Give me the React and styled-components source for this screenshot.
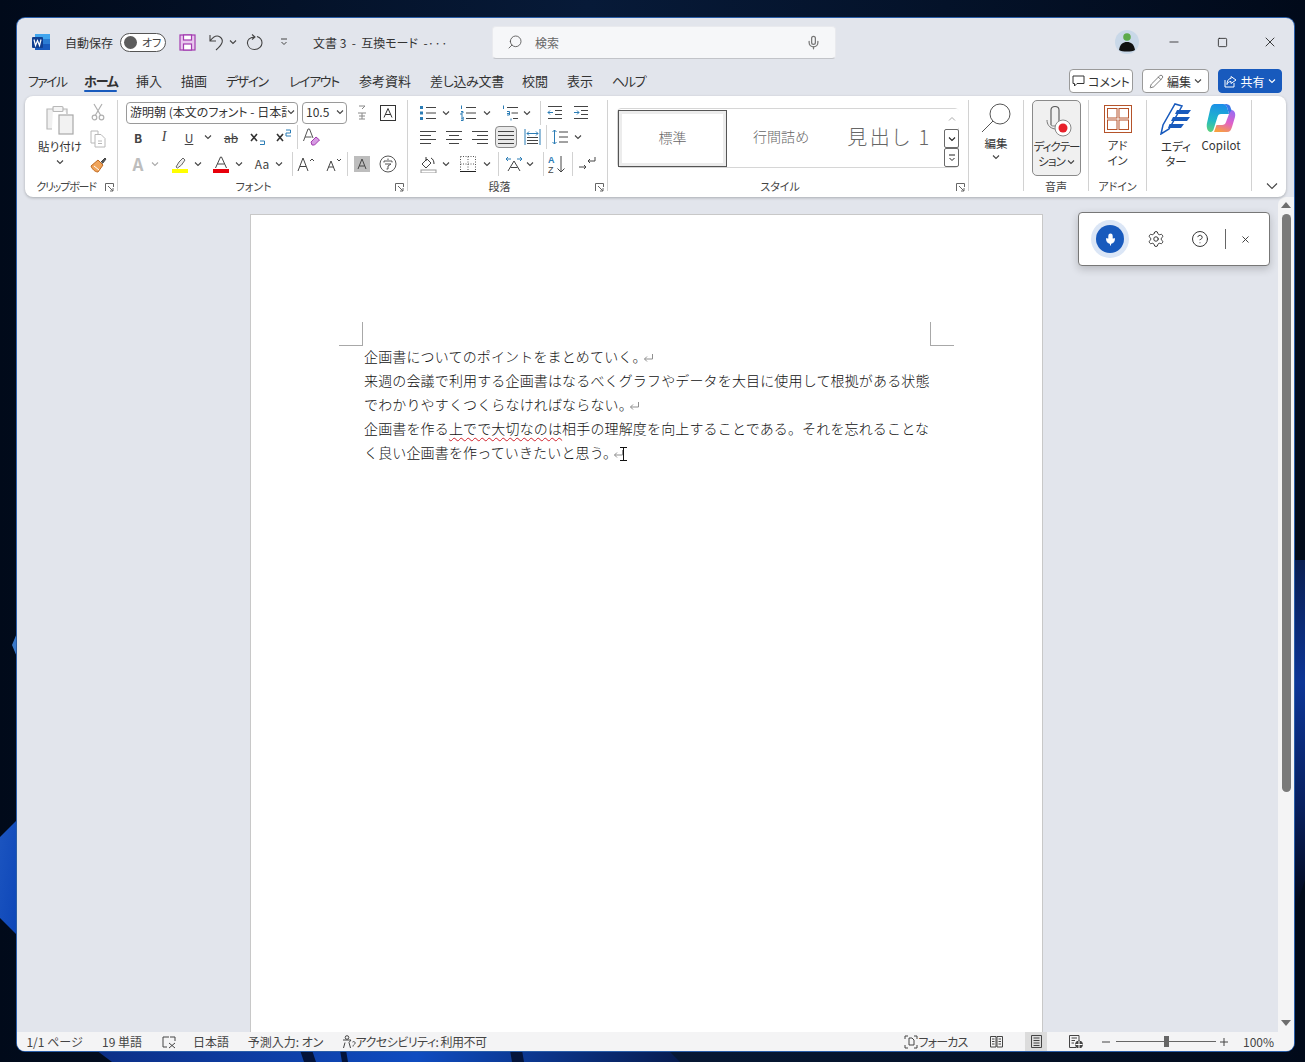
import React from 'react';
import styled, { createGlobalStyle } from 'styled-components';
import { Mic, Minus, Square, X, Settings, CircleHelp, Search, Pencil } from 'lucide-react';

const GlobalStyle = createGlobalStyle`
  html, body { margin: 0; padding: 0; width: 1305px; height: 1062px; overflow: hidden; background: #06142c; }
  * { box-sizing: border-box; }
  body {
    font-family: "Noto Sans CJK JP", "Noto Sans", sans-serif;
    font-feature-settings: "palt";
    color: #333;
  }
`;

// Desktop
const Desktop = styled.div`
  position: relative;
  width: 1305px;
  height: 1062px;
  padding: 18px 11px 11px 17px;
  background: linear-gradient(90deg, #010a1a 0%, #071a38 45%, #010a1a 100%);
`;

const Wallpaper = styled.svg`
  position: absolute;
  inset: 0;
`;

const Window = styled.div`
  position: relative;
  display: flex;
  flex-direction: column;
  width: 1277px;
  height: 1033px;
  background: #e2e5ec;
  border-radius: 8px;
  box-shadow: 0 0 0 1px #2a5ea8;
  overflow: hidden;
`;

// Title bar
const TitleBar = styled.div`
  display: flex;
  align-items: center;
  height: 48px;
  flex: none;
`;

const Item = styled.div`
  display: flex;
  align-items: center;
  justify-content: center;
  flex: none;
  width: ${(p) => (p.$w ? `${p.$w}px` : 'auto')};
  margin-left: ${(p) => p.$ml || 0}px;
`;

const TitleText = styled.span`
  flex: none;
  width: ${(p) => (p.$w ? `${p.$w}px` : 'auto')};
  font-size: 12px;
  color: #333;
  white-space: nowrap;
  margin-left: ${(p) => p.$ml || 0}px;
`;

const Toggle = styled.div`
  display: flex;
  align-items: center;
  width: 46px;
  height: 19px;
  margin-left: 7px;
  padding-left: 3px;
  border: 1px solid #555;
  border-radius: 10px;
  background: #fff;
  font-size: 11px;
  color: #444;
  gap: 5px;
`;

const Knob = styled.div`
  width: 13px;
  height: 13px;
  border-radius: 50%;
  background: #5c5c5c;
`;

const SearchBox = styled.div`
  display: flex;
  align-items: center;
  width: 344px;
  height: 33px;
  margin-left: 47px;
  padding: 0 14px;
  background: #f6f7f9;
  border: 1px solid #e9eaee;
  border-bottom-color: #c2c4c9;
  border-radius: 4px;
  font-size: 12px;
  color: #666;
`;

const SearchLabel = styled.span`
  flex: 1;
  margin-left: 12px;
`;

// Tabs
const TabRow = styled.div`
  display: flex;
  align-items: flex-start;
  height: 30px;
  flex: none;
  padding-left: 11px;
`;

const Tab = styled.div`
  flex: none;
  width: ${(p) => p.$w}px;
  margin-left: ${(p) => p.$ml}px;
  height: 26px;
  padding-top: 7px;
  font-size: 13px;
  line-height: 16px;
  letter-spacing: ${(p) => p.$ls || 0}px;
  white-space: nowrap;
  color: #333;
  font-weight: ${(p) => (p.$active ? 700 : 400)};
  position: relative;
  &::after {
    content: '';
    display: ${(p) => (p.$active ? 'block' : 'none')};
    position: absolute;
    left: 0;
    right: 0;
    top: 24px;
    height: 2px;
    background: #185abd;
    border-radius: 1px;
  }
`;

const TabActions = styled.div`
  display: flex;
  gap: 9px;
  margin-left: auto;
  margin-right: 12px;
  margin-top: 3px;
`;

const ActionBtn = styled.div`
  display: flex;
  align-items: center;
  justify-content: center;
  gap: 3px;
  width: ${(p) => p.$w}px;
  height: 24px;
  font-size: 12px;
  background: ${(p) => (p.$primary ? '#185abd' : '#fff')};
  color: ${(p) => (p.$primary ? '#fff' : '#333')};
  border: 1px solid ${(p) => (p.$primary ? '#185abd' : '#9a9a9a')};
  border-radius: 4px;
`;

// Ribbon
const Ribbon = styled.div`
  display: flex;
  flex: none;
  width: 1261px;
  height: 101px;
  margin-left: 8px;
  padding-top: 4px;
  background: #fff;
  border-radius: 8px;
  box-shadow: 0 1px 3px rgba(0, 0, 0, 0.25);
  position: relative;
  z-index: 2;
`;

const Group = styled.div`
  display: flex;
  flex-direction: column;
  flex: none;
  position: relative;
  width: ${(p) => p.$w}px;
  height: 91px;
  padding-left: ${(p) => p.$pl || 0}px;
  border-right: ${(p) => (p.$last ? 'none' : '1px solid #d2d2d2')};
`;

const GroupBody = styled.div`
  flex: 1;
  display: flex;
  flex-direction: ${(p) => (p.$row ? 'row' : 'column')};
`;

const GroupLabel = styled.div`
  position: relative;
  margin-left: ${(p) => (p.$pl ? -p.$pl : 0)}px;
  margin-right: ${(p) => p.$mr || 0}px;
  height: 14px;
  margin-bottom: -2px;
  font-size: 11px;
  line-height: 14px;
  letter-spacing: ${(p) => p.$ls || 0}px;
  text-align: center;
  color: #444;
  white-space: nowrap;
`;

const Launcher = styled.svg`
  position: absolute;
  right: 3px;
  bottom: -1px;
`;

const Row = styled.div`
  display: flex;
  align-items: center;
  height: ${(p) => p.$h}px;
  margin-top: ${(p) => p.$mt || 0}px;
`;

const Tool = styled.div`
  display: flex;
  align-items: center;
  justify-content: center;
  flex: none;
  width: ${(p) => p.$w}px;
  height: ${(p) => (p.$on ? '22px' : 'auto')};
  margin-left: ${(p) => p.$ml || 0}px;
  font-size: 12px;
  color: #444;
  ${(p) => p.$on && 'background:#e9e9e9;border:1px solid #8a8a8a;border-radius:4px;width:22px;margin:0 2px;'}
`;

const BoldGlyph = styled.b`
  font-size: ${(p) => p.$fs || 12}px;
  color: ${(p) => p.$color || '#444'};
`;

const ItalicGlyph = styled.i`
  font-family: "Liberation Serif", serif;
  font-size: 14px;
`;

const Sep = styled.div`
  flex: none;
  width: 1px;
  height: 24px;
  margin-left: ${(p) => p.$ml || 0}px;
  background: #d2d2d2;
`;

const SelectBox = styled.div`
  display: flex;
  align-items: center;
  flex: none;
  width: ${(p) => p.$w}px;
  height: 22px;
  margin-left: ${(p) => p.$ml || 0}px;
  padding: 0 2px 2px 3px;
  border: 1px solid #9a9a9a;
  border-radius: 4px;
  background: #fff;
  font-size: 12px;
  color: #333;
  overflow: hidden;
  white-space: nowrap;
`;

const SelectText = styled.span`
  flex: 1;
  overflow: hidden;
`;

const BigBtn = styled.div`
  display: flex;
  flex-direction: column;
  align-items: center;
  flex: none;
  width: ${(p) => p.$w}px;
  margin-left: ${(p) => p.$ml || 0}px;
  padding-top: ${(p) => p.$pt ?? 3}px;
  height: ${(p) => p.$h || 78}px;
  font-size: 11.5px;
  line-height: 15px;
  text-align: center;
  color: #333;
  ${(p) => p.$on && `
    margin-top: 0;
    background: #f0f0f0;
    border: 1px solid #8a8a8a;
    border-radius: 5px;
    padding-top: 4px;
    height: 76px;
  `}
`;

const BigLabel = styled.div`
  margin-top: ${(p) => p.$mt ?? 3}px;
  letter-spacing: ${(p) => p.$ls || 0}px;
  white-space: nowrap;
`;

const BigChev = styled.div`
  display: flex;
  margin-top: ${(p) => p.$mt || 0}px;
`;

const StackTools = styled.div`
  display: flex;
  flex-direction: column;
  align-items: center;
  width: 30px;
  margin-left: ${(p) => p.$ml}px;
  padding-top: 3px;
  gap: 9px;
`;

const Gallery = styled.div`
  display: flex;
  width: 342px;
  height: 60px;
  margin: 8px 0 0 9px;
  border: 1px solid #d6d6d6;
  border-radius: 4px;
`;

const StyleCell = styled.div`
  display: flex;
  align-items: center;
  justify-content: center;
  flex: none;
  width: ${(p) => p.$w}px;
  height: 58px;
  padding-bottom: 4px;
  color: #666;
  font-size: ${(p) => p.$fs || 14}px;
  font-weight: 300;
  letter-spacing: ${(p) => p.$ls || 0}px;
  ${(p) => p.$on && `
    height: 57px;
    margin: 1px 0 0 0;
    border: 1px solid #555;
    box-shadow: inset 0 0 0 3px #ececec;
    background: #fff;
  `}
`;

const GalleryScroll = styled.div`
  display: flex;
  flex-direction: column;
  margin-left: auto;
  width: 15px;
  flex: none;
`;

const ScrollBtn = styled.div`
  display: flex;
  align-items: center;
  justify-content: center;
  height: ${(p) => p.$h}px;
  border: 1px solid ${(p) => (p.$dim ? 'transparent' : '#6a6a6a')};
  border-radius: 2px;
  background: #fff;
`;

const RibbonChevron = styled.div`
  position: absolute;
  right: 8px;
  bottom: 7px;
  display: flex;
`;

// Document area
const Body = styled.div`
  flex: 1;
  display: flex;
  min-height: 0;
`;

const DocArea = styled.div`
  position: relative;
  flex: 1;
  padding: 17px 0 0 233px;
  overflow: hidden;
`;

const Page = styled.div`
  position: relative;
  width: 793px;
  height: 900px;
  padding: 129px 0 0 113px;
  background: #fff;
  border: 1px solid #c8c8c8;
`;

const Crop = styled.div`
  position: absolute;
  top: 107px;
  width: 24px;
  height: 24px;
  border-bottom: 1px solid #a8a8a8;
  ${(p) => (p.$right
    ? 'left: 679px; border-left: 1px solid #a8a8a8;'
    : 'left: 88px; border-right: 1px solid #a8a8a8;')}
`;

const DocLine = styled.div`
  height: 24px;
  font-size: 14px;
  line-height: 24px;
  letter-spacing: 0.15px;
  font-feature-settings: normal;
  font-weight: 300;
  color: #111;
  white-space: nowrap;
`;

const Squiggle = styled.span`
  text-decoration: underline wavy #d0202a 1px;
  text-underline-offset: 3px;
`;

const ReturnMark = styled.svg`
  margin-left: -4px;
  vertical-align: -1px;
`;

const Caret = styled.svg`
  position: absolute;
  left: 368px;
  top: 232px;
`;

const DictationBar = styled.div`
  position: absolute;
  left: 1061px;
  top: 15px;
  display: flex;
  align-items: center;
  width: 192px;
  height: 54px;
  background: #fff;
  border: 1px solid #777;
  border-radius: 4px;
  box-shadow: 0 3px 8px rgba(0, 0, 0, 0.2);
`;

const MicBtn = styled.div`
  display: flex;
  align-items: center;
  justify-content: center;
  flex: none;
  width: 28px;
  height: 28px;
  margin-left: 17px;
  border-radius: 50%;
  background: #185abd;
  box-shadow: 0 0 0 5px #dbe6f6;
`;

const DictSep = styled.div`
  width: 1px;
  height: 20px;
  margin-left: 15px;
  background: #666;
`;

const ScrollBar = styled.div`
  display: flex;
  flex-direction: column;
  align-items: center;
  flex: none;
  width: 16px;
  background: #f4f4f5;
  border-radius: 8px 0 0 0;
  padding-top: 5px;
  position: relative;
  z-index: 1;
`;

const Arrow = styled.div`
  width: 0;
  height: 0;
  border-left: 5px solid transparent;
  border-right: 5px solid transparent;
  ${(p) => (p.$up ? 'border-bottom: 6px solid #6e6e6e;' : 'border-top: 6px solid #6e6e6e;')}
`;

const Thumb = styled.div`
  width: 9px;
  height: 578px;
  margin-top: 6px;
  background: #7a7a7a;
  border-radius: 5px;
`;

const ArrowBottom = styled(Arrow)`
  margin-top: auto;
  margin-bottom: 6px;
`;

// Status bar
const StatusBar = styled.div`
  display: flex;
  align-items: center;
  flex: none;
  height: 19px;
  background: #f4f4f5;
  font-size: 12px;
  color: #444;
  white-space: nowrap;
`;

const StatusItem = styled.span`
  display: flex;
  align-items: center;
  justify-content: center;
  flex: none;
  height: 19px;
  margin-left: ${(p) => p.$ml || 0}px;
  letter-spacing: ${(p) => p.$ls || 0}px;
  ${(p) => p.$w && `width: ${p.$w}px;`}
  ${(p) => p.$on && 'background: #dcdcdc;'}
`;

const Slider = styled.div`
  position: relative;
  flex: none;
  width: 100px;
  height: 1px;
  margin-left: 5px;
  background: #666;
`;

const SliderThumb = styled.div`
  position: absolute;
  left: 48px;
  top: -5px;
  width: 5px;
  height: 11px;
  background: #666;
`;

// Icons
const Ic = ({ w = 20, h = 20, vb, children, stroke = '#444', sw = 1 }) => (
  <svg width={w} height={h} viewBox={vb || `0 0 ${w} ${h}`} fill="none" stroke={stroke} strokeWidth={sw}>{children}</svg>
);

const Chev = ({ size = 8, color = '#444' }) => (
  <Ic w={size} h={size} vb="0 0 8 8" stroke={color} sw={1.1}><path d="M1 2.5 4 5.5 7 2.5" /></Ic>
);

const LineStack = ({ w = 16, rows = [[0, 16], [0, 16], [0, 16], [0, 16]], gap = 4, color = '#444' }) => (
  <Ic w={w} h={16} stroke={color}>
    {rows.map((r, i) => <path key={i} d={`M${r[0]} ${2.5 + i * gap}H${r[1]}`} />)}
  </Ic>
);

const WordLogo = () => (
  <svg width="18" height="18" viewBox="0 0 18 18">
    <rect x="3" y="1" width="15" height="16" rx="1.5" fill="#2b7cd3" />
    <rect x="3" y="1" width="15" height="5" fill="#41a5ee" />
    <rect x="3" y="11" width="15" height="6" fill="#185abd" />
    <rect x="0" y="4" width="11" height="11" rx="1" fill="#103f91" />
    <path d="M2 6.5 3.5 12.5 5.5 7.5 7.5 12.5 9 6.5" stroke="#fff" strokeWidth="1.2" fill="none" />
  </svg>
);

const SaveIcon = () => (
  <Ic w={17} h={17} stroke="#a23bb0" sw={1.2}>
    <rect x="1" y="1" width="15" height="15" fill="#e8c8ee" />
    <rect x="4.5" y="1" width="8" height="5" fill="#fff" />
    <rect x="4.5" y="10" width="8" height="6" fill="#fff" />
  </Ic>
);

const UndoIcon = () => (
  <Ic w={17} h={18} sw={1.1}><path d="M2 2V8H8M2 8C5 4 9 2 12 4 16 7 15 11 8 17" /></Ic>
);

const RedoIcon = () => (
  <Ic w={17} h={18} sw={1.1}><path d="M6 1.5 9 4 6 6.5M9 4C4 4 1 7 1.5 10.5 2 14 5 16.5 8.5 16.5 13 16.5 16 13 16 10 16 7 14 4.500 11 3.500" /></Ic>
);

const PasteIcon = () => (
  <Ic w={30} h={30} stroke="#b8b8b8" sw={1.2}>
    <path d="M7 24H2V4H8M18 4H22V9" fill="#f0f0f0" />
    <rect x="8" y="1.500" width="10" height="5" rx="1" fill="#f4f4f4" />
    <rect x="14" y="10" width="14" height="19" fill="#f2f2f2" stroke="#a8a8a8" />
  </Ic>
);

const CutIcon = () => (
  <Ic w={14} h={18} stroke="#b0b0b0" sw={1.2}>
    <path d="M3 1 9.500 12M11 1 4.500 12" />
    <circle cx="3.500" cy="14.500" r="2.300" />
    <circle cx="10.500" cy="14.500" r="2.300" />
  </Ic>
);

const CopyIcon = () => (
  <Ic w={16} h={18} stroke="#b8b8b8">
    <path d="M1 1H8V4M1 1V13H5" />
    <path d="M5 4.500H11L15 8.500V17H5Z" fill="#fff" />
    <path d="M8 11H12M8 13.500H12" />
  </Ic>
);

const PainterIcon = () => (
  <svg width="17" height="17" viewBox="0 0 17 17">
    <path d="M1 9 8 3 13 8 8 15C5 15 2 12 1 9Z" fill="#f0a45a" stroke="#c06a20" />
    <path d="M11 5 15 1 16 2 12.500 6.500" fill="#555" stroke="#444" />
    <path d="M4 9 9 13" stroke="#fff" />
  </svg>
);

const ClearIcon = () => (
  <svg width="18" height="20" viewBox="0 0 18 20">
    <path d="M1.500 14 6 2H7.500L11 11M3 10H9.500" stroke="#555" fill="none" />
    <path d="M9 15 14 10 17.500 13 12.500 18H10Z" fill="#d69be2" stroke="#a23bb0" />
  </svg>
);

const ColorA = ({ bar, pen }) => (
  <Ic w={18} h={18}>
    {pen
      ? <path d="M5 12 8 7 12 3 14 5 10.500 10 6.500 13Z" stroke="#666" fill="#eee" />
      : <path d="M3.500 13 8.500 2H9.500L14.500 13M5.500 9H12.500" stroke="#444" />}
    <rect x="1" y="14" width="16" height="4" fill={bar} stroke="none" />
  </Ic>
);

const BulletIcon = () => (
  <Ic w={17} h={16}>
    <rect x="0" y="1" width="3" height="3" fill="#2b7cb5" stroke="none" />
    <rect x="0" y="6.500" width="3" height="3" fill="#2b7cb5" stroke="none" />
    <rect x="0" y="12" width="3" height="3" fill="#2b7cb5" stroke="none" />
    <path d="M6 2.500H16M6 8H16M6 13.500H16" />
  </Ic>
);

const NumberIcon = () => (
  <Ic w={17} h={16}>
    <path d="M1.500 0.500V4M1 6.500H3V8H1V10H3M1 12H3.200V15.500H1M1 13.800H3" stroke="#2b7cb5" />
    <path d="M6 2.500H16M6 8H16M6 13.500H16" />
  </Ic>
);

const MultiIcon = () => (
  <Ic w={17} h={16}>
    <path d="M1.500 0.500V4M5 6.500H7.500V10H5M5 8.500H7.500M9 13.500V15.500" stroke="#2b7cb5" />
    <path d="M5 2.500H16M9.500 8H16M11 13.500H16" />
  </Ic>
);

const IndentIcon = ({ flip }) => (
  <Ic w={16} h={16}>
    <path d="M1 1.500H15M8 5.500H15M8 9.500H15M1 13.500H15" />
    <path d={flip ? 'M1 7.500H6M4 5.500 6 7.500 4 9.500' : 'M1 7.500H6M3 5.500 1 7.500 3 9.500'} stroke="#2b7cb5" />
  </Ic>
);

const DistributeIcon = () => (
  <Ic w={17} h={16}>
    <path d="M1 0V16M16 0V16" stroke="#2b7cb5" />
    <path d="M3 4.500H14M5 2.500 3 4.500 5 6.500M12 2.500 14 4.500 12 6.500" stroke="#2b7cb5" />
    <path d="M3 8.500H14M3 11.500H14M3 14.500H14" />
  </Ic>
);

const SpacingIcon = () => (
  <Ic w={17} h={16}>
    <path d="M2.500 1V15M0.500 3 2.500 1 4.500 3M0.500 13 2.500 15 4.500 13" stroke="#2b7cb5" />
    <path d="M7 3H16M7 8H16M7 13H16" />
  </Ic>
);

const ShadeIcon = () => (
  <Ic w={17} h={18}>
    <path d="M2 9 7 4 11 8 6 13Z" fill="#fff" />
    <path d="M6 2V6M11 3C13 4 14 6 14 9" stroke="#333" />
    <rect x="1" y="15" width="15" height="3" fill="#fff" stroke="#999" />
  </Ic>
);

const BorderIcon = () => (
  <Ic w={16} h={16} stroke="#555">
    <path d="M0.500 0.500H15.500M0.500 0.500V15M15.500 0.500V15M8 0.500V15M0.500 8H15.500" strokeDasharray="1 1.500" />
    <path d="M0 15.500H16" stroke="#222" />
  </Ic>
);

const DirectionIcon = () => (
  <Ic w={18} h={16}>
    <path d="M3 15 9 5 15 15M5.500 11.500H12.500" />
    <path d="M1 3H6M3 1 1 3 3 5M12 3H17M15 1 17 3 15 5" stroke="#2b7cb5" />
  </Ic>
);

const SortIcon = () => (
  <svg width="18" height="20" viewBox="0 0 18 20">
    <text x="0" y="8.500" fontSize="9" fill="#2b7cb5" fontFamily="Liberation Sans" fontWeight="700">A</text>
    <text x="0" y="18.500" fontSize="9" fill="#444" fontFamily="Liberation Sans">Z</text>
    <path d="M13 2V18M9.500 14.500 13 18 16.500 14.500" stroke="#444" fill="none" />
  </svg>
);

const MarkIcon = () => (
  <Ic w={18} h={16}>
    <path d="M1 11H8M6 9 8 11 6 13" />
    <path d="M17 1V5H10M12 3 10 5 12 7" />
  </Ic>
);

const DictIcon = () => (
  <svg width="30" height="32" viewBox="0 0 30 32" fill="none">
    <path d="M9 20V5C9 3 10.500 1.500 13 1.500 15.500 1.500 17 3 17 5V17" stroke="#555" strokeWidth="1.1" />
    <path d="M5 15C5 19 7 23 13 24M9 20C9 21 11 21 13 21" stroke="#777" strokeWidth="1" />
    <circle cx="21" cy="23" r="8" fill="#fff" stroke="#888" />
    <circle cx="21" cy="23" r="4.500" fill="#e8202a" />
  </svg>
);

const AddinIcon = () => (
  <Ic w={28} h={28} stroke="#b5532a" sw={1}>
    <rect x="0.500" y="0.500" width="27" height="27" />
    <rect x="3.500" y="3.500" width="9.500" height="9.500" />
    <rect x="15" y="3.500" width="9.500" height="9.500" />
    <rect x="3.500" y="15" width="9.500" height="9.500" />
    <rect x="15" y="15" width="9.500" height="9.500" />
  </Ic>
);

const EditorIcon = () => (
  <svg width="32" height="32" viewBox="0 0 32 32">
    <path d="M1 31 3 22 15 1 22 3 9 26Z" fill="#fff" stroke="#185abd" strokeWidth="1.500" />
    <path d="M17 7H31L28 11H15ZM13 14H30L27 18H11ZM9.500 21H24L21 25H8Z" fill="#185abd" />
  </svg>
);

const CopilotIcon = () => (
  <svg width="30" height="30" viewBox="0 0 30 30">
    <defs>
      <linearGradient id="cpa" x1="0.500" y1="0" x2="0.300" y2="1">
        <stop offset="0" stopColor="#1b8fe8" />
        <stop offset="0.600" stopColor="#20b8c8" />
        <stop offset="1" stopColor="#58d080" />
      </linearGradient>
      <linearGradient id="cpb" x1="0.700" y1="0" x2="0.300" y2="1">
        <stop offset="0" stopColor="#9a6cf0" />
        <stop offset="0.500" stopColor="#e060c8" />
        <stop offset="1" stopColor="#f8a040" />
      </linearGradient>
    </defs>
    <path d="M9 1H17C19 1 20 2 21 4L23 11H15C13 11 12 12 11.500 14L8 25C7.500 27.500 6 29 4.500 29 2 29 0 25 1 20L4 7C5 3 6 1 9 1Z" fill="url(#cpa)" />
    <path d="M8 29H21C24 29 25 27 26 24L29 14C30 10 28 7 25.500 7 24 7 23 8.500 23 11L20 19C19.500 21 18 22 16 22H10.500Z" fill="url(#cpb)" />
    <path d="M17 1C19 1 20 2 21 4L23 11 25.500 7 24 3C23 1.500 21 1 19 1Z" fill="#3878e8" />
  </svg>
);

const Avatar = () => (
  <svg width="24" height="24" viewBox="0 0 24 24">
    <circle cx="12" cy="12" r="12" fill="#c9d8e8" />
    <circle cx="12" cy="7" r="3.800" fill="#5caa4a" />
    <path d="M4 20C5 14 8 12 12 12 16 12 19 14 20 20 17 22 7 22 4 20Z" fill="#111" />
  </svg>
);

const Launch = () => (
  <Launcher width="9" height="9" viewBox="0 0 9 9" fill="none" stroke="#666">
    <path d="M0.500 8V0.500H8.500V4M3 3 8 8M8 5V8H5" />
  </Launcher>
);

const Return = () => (
  <ReturnMark width="11" height="10" viewBox="0 0 11 10" fill="none" stroke="#8f8f8f">
    <path d="M9.500 1V6H1.500M4 3.500 1.500 6 4 8.500" />
  </ReturnMark>
);

const tabs = [
  ['ファイル', 37, 0, -1.7], ['ホーム', 33, 19, -1.1], ['挿入', 25, 19, 0], ['描画', 25, 20, 0], ['デザイン', 42, 20, -1.5],
  ['レイアウト', 49, 21, -1.4], ['参考資料', 52, 21, 0], ['差し込み文書', 73, 19, -0.3], ['校閲', 26, 19, 0], ['表示', 25, 19, 0], ['ヘルプ', 32, 20, -1.3],
];

function App() {
  return (
    <Desktop>
      <GlobalStyle />
      <Wallpaper width="1305" height="1062">
        <defs>
          <linearGradient id="wb" x1="0" y1="0" x2="1" y2="1">
            <stop offset="0" stopColor="#1c55c0" />
            <stop offset="1" stopColor="#0d46b8" />
          </linearGradient>
          <linearGradient id="wr" x1="0" y1="0" x2="0" y2="1">
            <stop offset="0" stopColor="#0a1f52" />
            <stop offset="0.350" stopColor="#0c3596" />
            <stop offset="0.700" stopColor="#082060" />
            <stop offset="1" stopColor="#020818" />
          </linearGradient>
          <linearGradient id="wf" x1="0" y1="0" x2="1" y2="0">
            <stop offset="0" stopColor="#0c2f86" />
            <stop offset="0.550" stopColor="#0f4cc0" />
            <stop offset="1" stopColor="#071c50" />
          </linearGradient>
        </defs>
        <path d="M17 633 12 645 17 657Z" fill="#3a78c8" />
        <path d="M0 837 17 820V935L0 918Z" fill="url(#wb)" />
        <path d="M96 1050 112 1062H680L668 1050Z" fill="url(#wf)" />
        <path d="M300 1050H312L316 1062H304ZM340 1050H346L348 1062H342ZM510 1050H522L524 1062H512Z" fill="#04143a" />
        <path d="M1295 560H1305V880L1295 910Z" fill="url(#wr)" />
      </Wallpaper>
      <Window>
        <TitleBar>
          <Item $ml={15}><WordLogo /></Item>
          <TitleText $ml={15}>自動保存</TitleText>
          <Toggle><Knob />オフ</Toggle>
          <Item $ml={13}><SaveIcon /></Item>
          <Item $ml={12}><UndoIcon /></Item>
          <Item $ml={3} $w={10}><Chev /></Item>
          <Item $ml={8}><RedoIcon /></Item>
          <Item $ml={17} $w={8}><Ic w={8} h={8}><path d="M1 1H7M1.500 4 4 6.500 6.500 4" /></Ic></Item>
          <TitleText $ml={25} $w={132}>文書 3 &nbsp;-&nbsp; 互換モード &nbsp;-···</TitleText>
          <SearchBox>
            <Search size={16} color="#555" strokeWidth={1.3} style={{ transform: 'scaleX(-1)' }} />
            <SearchLabel>検索</SearchLabel>
            <Mic size={15} color="#777" />
          </SearchBox>
          <Item $ml={279}><Avatar /></Item>
          <Item $ml={27} $w={16}><Minus size={14} color="#222" strokeWidth={1.4} /></Item>
          <Item $ml={32} $w={16}><Square size={11} color="#222" strokeWidth={1.8} /></Item>
          <Item $ml={32} $w={16}><X size={16} color="#222" strokeWidth={1.3} /></Item>
        </TitleBar>
        <TabRow>
          {tabs.map(([label, w, ml, ls], i) => (
            <Tab key={label} $w={w} $ml={ml} $ls={ls} $active={i === 1}>{label}</Tab>
          ))}
          <TabActions>
            <ActionBtn $w={64}>
              <Ic w={13} h={12} stroke="#333"><path d="M1 1H12V8.500H5L2.500 11V8.500H1Z" /></Ic>コメント
            </ActionBtn>
            <ActionBtn $w={67}>
              <Pencil size={15} color="#444" strokeWidth={1.1} />編集<Chev />
            </ActionBtn>
            <ActionBtn $w={64} $primary>
              <Ic w={13} h={13} stroke="#fff"><path d="M1 5V12H10V8M7 1.500 12 5 7 8.500V6.500C4.500 6.500 3.500 8 3 9.500 3 6 4.500 3.500 7 3.500Z" /></Ic>共有<Chev color="#fff" />
            </ActionBtn>
          </TabActions>
        </TabRow>
        <Ribbon>
          <Group $w={93}>
            <GroupBody $row>
              <BigBtn $w={54} $ml={8} $pt={5}>
                <PasteIcon />
                <BigLabel $mt={4}>貼り付け</BigLabel>
                <BigChev $mt={4}><Chev /></BigChev>
              </BigBtn>
              <StackTools $ml={-4}><CutIcon /><CopyIcon /><PainterIcon /></StackTools>
            </GroupBody>
            <GroupLabel $mr={10} $ls={-1.2}>クリップボード</GroupLabel>
            <Launch />
          </Group>

          <Group $w={290} $pl={8}>
            <GroupBody>
              <Row $h={23} $mt={1}>
                <SelectBox $w={172}><SelectText>游明朝 (本文のフォント - 日本語)</SelectText><Chev /></SelectBox>
                <SelectBox $w={45} $ml={4}><SelectText>10.5</SelectText><Chev /></SelectBox>
                <Tool $w={24} $ml={3}>
                  <Ic w={12} h={18} stroke="#888"><path d="M3 2H9L6 5M2 9H10M3 12H9M3 15H9M6 9V15" /></Ic>
                </Tool>
                <Tool $w={24} $ml={2}>
                  <Ic w={16} h={16} stroke="#333"><rect x=".5" y=".5" width="15" height="15" /><path d="M4 12.500 8 3.500 12 12.500M5.300 9.500H10.700" /></Ic>
                </Tool>
              </Row>
              <Row $h={26}>
                <Tool $w={24}><b>B</b></Tool>
                <Tool $w={28}><ItalicGlyph>I</ItalicGlyph></Tool>
                <Tool $w={22}><u>U</u></Tool>
                <Tool $w={16}><Chev /></Tool>
                <Tool $w={30}><s>ab</s></Tool>
                <Tool $w={24}><Ic w={16} h={16} stroke="#333" sw={1.6}><path d="M1 5 7 12M7 5 1 12" /><path d="M10 12H14.500V15.500H10" stroke="#2b7cb5" strokeWidth={1} /></Ic></Tool>
                <Tool $w={27}><Ic w={16} h={16} stroke="#333" sw={1.6}><path d="M1 5 7 12M7 5 1 12" /><path d="M10 1H14.500V4H10V7H15" stroke="#2b7cb5" strokeWidth={1} /></Ic></Tool>
                <Sep />
                <Tool $w={26}><ClearIcon /></Tool>
              </Row>
              <Row $h={27}>
                <Tool $w={24}><BoldGlyph $fs={17} $color="#bdbdbd">A</BoldGlyph></Tool>
                <Tool $w={10}><Chev color="#aaa" /></Tool>
                <Tool $w={26} $ml={7}><ColorA bar="#ffff00" pen /></Tool>
                <Tool $w={10}><Chev /></Tool>
                <Tool $w={26} $ml={5}><ColorA bar="#e8000b" /></Tool>
                <Tool $w={10}><Chev /></Tool>
                <Tool $w={24} $ml={6}>Aa</Tool>
                <Tool $w={10}><Chev /></Tool>
                <Sep $ml={8} />
                <Tool $w={26}><Ic w={18} h={16}><path d="M1 15 6 2 11 15M3 10.500H9M13 5 15 3 17 5" /></Ic></Tool>
                <Tool $w={28}><Ic w={18} h={16}><path d="M3 15 7 5 11 15M4.500 11H9.500M13 3 15 5 17 3" stroke="#444" /></Ic></Tool>
                <Sep />
                <Tool $w={28}><Ic w={16} h={16} stroke="none"><rect width="16" height="16" fill="#bdbdbd" /><path d="M4 13 8 3 12 13M5.500 10H10.500" stroke="#444" /></Ic></Tool>
                <Tool $w={24}><Ic w={18} h={18} stroke="#555"><circle cx="9" cy="9" r="8" /><path d="M5 6H13V7.500M5 7.500V6M9 3.500V5M6 9H12L9 11V14L7.500 14" /></Ic></Tool>
              </Row>
            </GroupBody>
            <GroupLabel $pl={8} $mr={18}>フォント</GroupLabel>
            <Launch />
          </Group>

          <Group $w={200} $pl={7}>
            <GroupBody>
              <Row $h={23} $mt={1}>
                <Tool $w={26}><BulletIcon /></Tool>
                <Tool $w={10}><Chev /></Tool>
                <Tool $w={24} $ml={5}><NumberIcon /></Tool>
                <Tool $w={10} $ml={2}><Chev /></Tool>
                <Tool $w={24} $ml={6}><MultiIcon /></Tool>
                <Tool $w={10}><Chev /></Tool>
                <Sep $ml={8} />
                <Tool $w={28}><IndentIcon /></Tool>
                <Tool $w={24}><IndentIcon flip /></Tool>
              </Row>
              <Row $h={26}>
                <Tool $w={26}><LineStack rows={[[0, 16], [0, 11], [0, 16], [0, 11]]} /></Tool>
                <Tool $w={26}><LineStack rows={[[0, 16], [3, 13], [0, 16], [3, 13]]} /></Tool>
                <Tool $w={26}><LineStack rows={[[0, 16], [5, 16], [0, 16], [5, 16]]} /></Tool>
                <Tool $w={26} $on><LineStack /></Tool>
                <Tool $w={26}><DistributeIcon /></Tool>
                <Sep $ml={1} />
                <Tool $w={26}><SpacingIcon /></Tool>
                <Tool $w={10}><Chev /></Tool>
              </Row>
              <Row $h={27}>
                <Tool $w={26}><ShadeIcon /></Tool>
                <Tool $w={10}><Chev /></Tool>
                <Tool $w={24} $ml={5}><BorderIcon /></Tool>
                <Tool $w={10} $ml={2}><Chev /></Tool>
                <Sep $ml={6} />
                <Tool $w={24} $ml={3}><DirectionIcon /></Tool>
                <Tool $w={8}><Chev /></Tool>
                <Sep $ml={9} />
                <Tool $w={26}><SortIcon /></Tool>
                <Sep $ml={2} />
                <Tool $w={28}><MarkIcon /></Tool>
              </Row>
            </GroupBody>
            <GroupLabel $pl={7} $mr={16}>段落</GroupLabel>
            <Launch />
          </Group>

          <Group $w={361}>
            <GroupBody>
              <Gallery>
                <StyleCell $w={109} $on>標準</StyleCell>
                <StyleCell $w={108}>行間詰め</StyleCell>
                <StyleCell $w={109} $fs={20} $ls={2.5}>見出し 1</StyleCell>
                <GalleryScroll>
                  <ScrollBtn $h={20} $dim><Ic w={8} h={8} stroke="#aaa"><path d="M1 5.500 4 2.500 7 5.500" /></Ic></ScrollBtn>
                  <ScrollBtn $h={19}><Chev color="#222" /></ScrollBtn>
                  <ScrollBtn $h={19}><Ic w={8} h={8} stroke="#222"><path d="M1 1H7M1.500 4 4 6.500 6.500 4" /></Ic></ScrollBtn>
                </GalleryScroll>
              </Gallery>
            </GroupBody>
            <GroupLabel $mr={16}>スタイル</GroupLabel>
            <Launch />
          </Group>

          <Group $w={55}>
            <BigBtn $w={54} $pt={3}>
              <Ic w={30} h={30} stroke="#555"><circle cx="19" cy="11" r="10" /><path d="M12 18 1 29" /></Ic>
              <BigLabel $mt={3}>編集</BigLabel>
              <BigChev $mt={2}><Chev /></BigChev>
            </BigBtn>
          </Group>

          <Group $w={65} $pl={8}>
            <GroupBody>
              <BigBtn $w={49} $on>
                <DictIcon />
                <BigLabel $mt={2} $ls={-1}>ディクテー</BigLabel>
                <BigLabel $mt={0} $ls={-0.8}>ション <Chev /></BigLabel>
              </BigBtn>
            </GroupBody>
            <GroupLabel $pl={8}>音声</GroupLabel>
          </Group>

          <Group $w={58}>
            <GroupBody>
              <BigBtn $w={57} $pt={5}>
                <AddinIcon />
                <BigLabel $mt={5}>アド</BigLabel>
                <BigLabel $mt={0}>イン</BigLabel>
              </BigBtn>
            </GroupBody>
            <GroupLabel>アドイン</GroupLabel>
          </Group>

          <Group $w={105}>
            <GroupBody $row>
              <BigBtn $w={58} $pt={3} $ml={0}>
                <EditorIcon />
                <BigLabel $mt={4}>エディ</BigLabel>
                <BigLabel $mt={0}>ター</BigLabel>
              </BigBtn>
              <BigBtn $w={30} $ml={1} $pt={3}>
                <CopilotIcon />
                <BigLabel $mt={5}>Copilot</BigLabel>
              </BigBtn>
            </GroupBody>
          </Group>

          <RibbonChevron><Ic w={12} h={8} stroke="#444" sw={1.1}><path d="M1 1.500 6 6.500 11 1.500" /></Ic></RibbonChevron>
        </Ribbon>

        <Body>
          <DocArea>
            <Page>
              <Crop />
              <Crop $right />
              <DocLine>企画書についてのポイントをまとめていく。<Return /></DocLine>
              <DocLine>来週の会議で利用する企画書はなるべくグラフやデータを大目に使用して根拠がある状態</DocLine>
              <DocLine>でわかりやすくつくらなければならない。<Return /></DocLine>
              <DocLine>企画書を作る<Squiggle>上でで大切なのは</Squiggle>相手の理解度を向上することである。それを忘れることな</DocLine>
              <DocLine>く良い企画書を作っていきたいと思う。<Return /></DocLine>
              <Caret width="9" height="14" viewBox="0 0 9 14" fill="none" stroke="#111">
                <path d="M1 .5H8M4.500 .5V13.500M1 13.500H8" />
              </Caret>
            </Page>
            <DictationBar>
              <MicBtn><Mic size={13} color="#fff" fill="#fff" /></MicBtn>
              <Item $ml={22} $w={20}><Settings size={18} color="#333" strokeWidth={1.3} /></Item>
              <Item $ml={24} $w={20}><CircleHelp size={18} color="#333" strokeWidth={1.3} /></Item>
              <DictSep />
              <Item $ml={11} $w={16}><X size={11} color="#333" strokeWidth={2} /></Item>
            </DictationBar>
          </DocArea>
          <ScrollBar>
            <Arrow $up />
            <Thumb />
            <ArrowBottom />
          </ScrollBar>
        </Body>

        <StatusBar>
          <StatusItem $ml={11} $w={53}>1/1 ページ</StatusItem>
          <StatusItem $ml={20} $w={42}>19 単語</StatusItem>
          <StatusItem $ml={19} $w={14}>
            <Ic w={14} h={14}><path d="M7 2H1V12H5M8 2H13V6M7 8 13 13M13 8 7 13" /></Ic>
          </StatusItem>
          <StatusItem $ml={17} $w={36}>日本語</StatusItem>
          <StatusItem $ml={19} $w={75}>予測入力: オン</StatusItem>
          <StatusItem $ml={19} $w={14}>
            <Ic w={14} h={14}><circle cx="5" cy="2.500" r="1.800" /><path d="M1 5H9L7 7.500 8.500 13M3 7.500 1.500 13M10.500 7C12 6 13.500 7 13 8.500 12.500 9.500 11 10 11 11.500" /></Ic>
          </StatusItem>
          <StatusItem $ml={1} $w={128} $ls={-0.5}>アクセシビリティ: 利用不可</StatusItem>
          <StatusItem $ml={419} $w={14}>
            <Ic w={14} h={14}><path d="M1 4V1H4M10 1H13V4M1 10V13H4M10 13H13V10M5 3H8L10 5V10H5Z" /></Ic>
          </StatusItem>
          <StatusItem $ml={2} $w={46} $ls={-0.8}>フォーカス</StatusItem>
          <StatusItem $ml={19} $w={22}>
            <Ic w={13} h={13}><path d="M.5 1.500H6V12H.5ZM7 1.500H12.500V12H7ZM2 4H4.500M2 6.500H4.500M2 9H4.500M8.500 4H11M8.500 6.500H11M8.500 9H11" /></Ic>
          </StatusItem>
          <StatusItem $ml={18} $w={22} $on>
            <Ic w={11} h={13}><path d="M.5.5H10.500V12.500H.5ZM2.500 3H8.500M2.500 5.500H8.500M2.500 8H8.500M2.500 10.500H8.500" /></Ic>
          </StatusItem>
          <StatusItem $ml={18} $w={22}>
            <Ic w={14} h={13}><path d="M.5.5H10V6M7 12.500H.5V.5M2.500 3H8M2.500 5.500H6M2.500 8H5" /><circle cx="10" cy="9.500" r="3.500" fill="#444" /><path d="M6.500 9.500H13.500M10 6V13" stroke="#fff" /></Ic>
          </StatusItem>
          <StatusItem $ml={14} $w={10}>
            <Ic w={10} h={10}><path d="M1 5H9" /></Ic>
          </StatusItem>
          <Slider><SliderThumb /></Slider>
          <StatusItem $ml={3} $w={10}>
            <Ic w={10} h={10}><path d="M1 5H9M5 1V9" /></Ic>
          </StatusItem>
          <StatusItem $ml={14}>100%</StatusItem>
        </StatusBar>
      </Window>
    </Desktop>
  );
}

export default App;
